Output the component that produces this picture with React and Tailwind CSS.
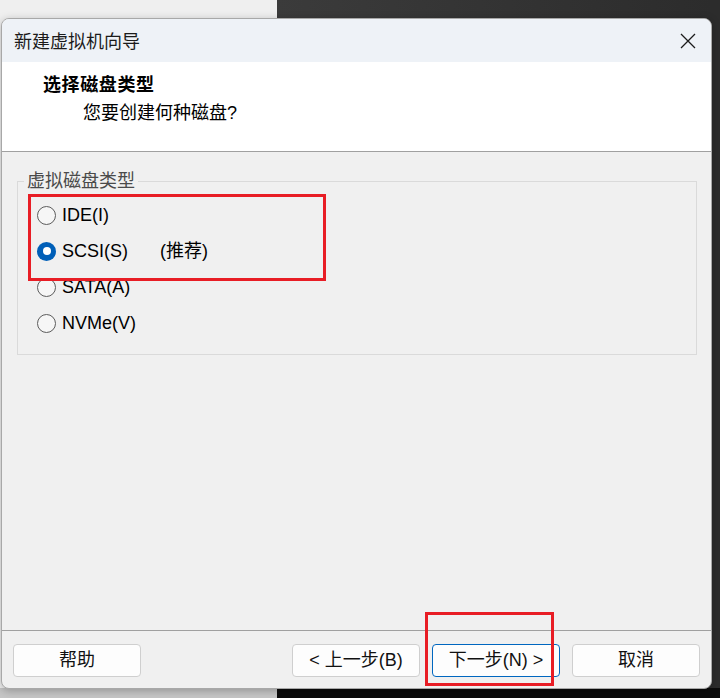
import React from 'react'

const options = [
  { key: 'ide', label: 'IDE(I)' },
  { key: 'scsi', label: 'SCSI(S)', note: '(推荐)' },
  { key: 'sata', label: 'SATA(A)' },
  { key: 'nvme', label: 'NVMe(V)' },
]

function Radio({ checked }) {
  if (checked) {
    return (
      <span className="w-[19px] h-[19px] rounded-full bg-[#005fb8] flex items-center justify-center shrink-0">
        <span className="w-[8px] h-[8px] rounded-full bg-white" />
      </span>
    )
  }
  return <span className="w-[19px] h-[19px] rounded-full border border-[#5c5c5c] bg-[#f6f6f6] shrink-0" />
}

function Button({ children, primary }) {
  return (
    <button
      className={
        primary
          ? 'w-[128px] h-[33px] rounded-[4px] border border-[#0067c0] bg-[#fdfdfd] text-[18px] text-[#111] flex items-center justify-center'
          : 'w-[128px] h-[33px] rounded-[4px] border border-[#cfcfcf] bg-[#fdfdfd] text-[18px] text-[#111] flex items-center justify-center'
      }
    >
      {children}
    </button>
  )
}

export default function App() {
  const selected = 'scsi'

  return (
    <div
      className="w-[720px] h-[698px] overflow-hidden pt-[18px] pl-px [background:linear-gradient(to_right,#c6c6c6_277px,#0b0b0b_277px)_bottom/100%_10px_no-repeat,linear-gradient(to_right,#efefef_277px,#3b3b3b_277px,#2c2c2c_712px)]"
      style={{ fontFamily: "'Liberation Sans', 'Noto Sans CJK SC', sans-serif" }}
    >
      <div className="relative w-[711px] h-[671px] rounded-lg border border-[#a8a8a8] bg-[#f0f0f0] flex flex-col overflow-hidden shadow-[0_2px_8px_rgba(0,0,0,0.25)]">
        {/* 标题栏 */}
        <div className="h-[43px] bg-[#eef2f7] flex items-center justify-between pl-[12px] pr-[15px] shrink-0">
          <span className="text-[18px] text-[#1b1b1b]" style={{ fontFamily: "'Noto Sans CJK SC', sans-serif" }}>
            新建虚拟机向导
          </span>
          <svg width="16" height="16" viewBox="0 0 16 16" fill="none" stroke="#1b1b1b" strokeWidth="1.3">
            <path d="M1 1L15 15M15 1L1 15" />
          </svg>
        </div>

        {/* 页头 */}
        <div className="h-[90px] bg-white border-b border-[#a0a0a0] shrink-0 pt-[10px] text-black">
          <div className="pl-[41px] text-[18px] font-bold leading-[26px] tracking-[0.6px]">选择磁盘类型</div>
          <div className="pl-[81px] text-[18px] leading-[26px] mt-[2px]">您要创建何种磁盘?</div>
        </div>

        {/* 内容 */}
        <div className="flex-1 pl-[15px] pr-[14px] pt-[17px]">
          <fieldset className="border border-[#dadada] pl-[19px] pb-[13px] pt-[4px]">
            <legend className="-ml-[13px] px-[3px] text-[18px] leading-[24px] text-[#4a4a4a]">虚拟磁盘类型</legend>
            {options.map((o) => (
              <div key={o.key} className="h-[36px] flex items-center">
                <Radio checked={o.key === selected} />
                <span className="ml-[6px] text-[18px] text-black">{o.label}</span>
                {o.note && <span className="ml-[32px] text-[18px] text-black">{o.note}</span>}
              </div>
            ))}
          </fieldset>
        </div>

        {/* 底部按钮 */}
        <div className="h-[58px] border-t border-[#a0a0a0] shrink-0 flex items-start justify-between pt-[13px] pl-[11px] pr-[11px]">
          <Button>帮助</Button>
          <div className="flex gap-[12px]">
            <Button>&lt; 上一步(B)</Button>
            <Button primary>下一步(N) &gt;</Button>
            <Button>取消</Button>
          </div>
        </div>

        {/* 红色标注框 */}
        <div className="absolute left-[26px] top-[175px] w-[298px] h-[87px] border-[3px] border-[#e81d25]" />
        <div className="absolute left-[423px] top-[593px] w-[129px] h-[74px] border-[3px] border-[#e81d25]" />
      </div>
    </div>
  )
}
